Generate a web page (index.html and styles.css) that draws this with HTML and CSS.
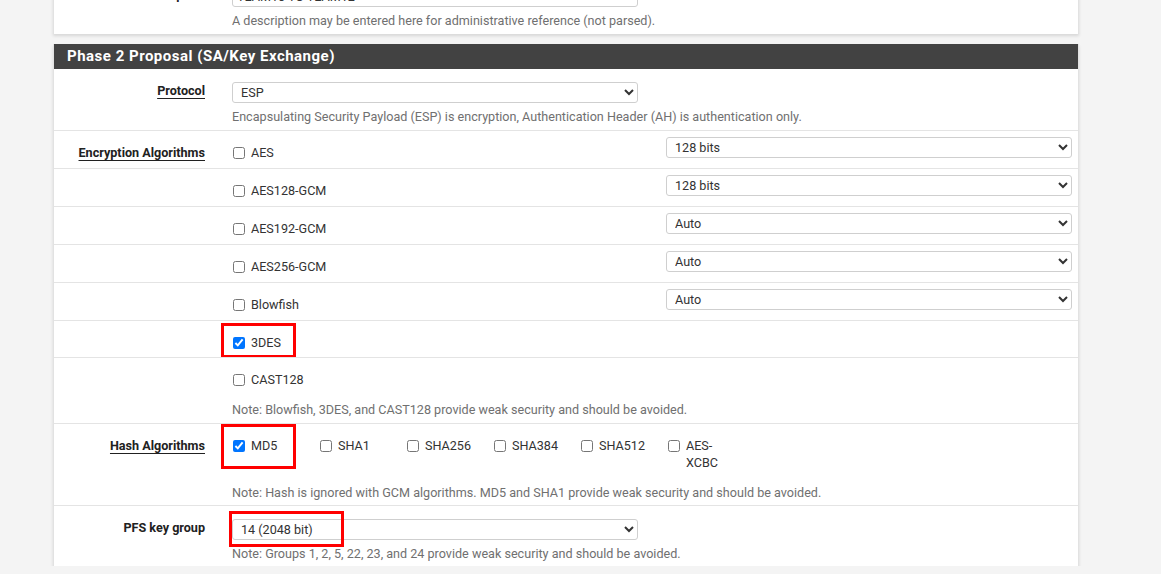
FILE: index.html
```html
<!DOCTYPE html>
<html lang="en">
<head>
<meta charset="utf-8">
<title>Phase 2 Proposal</title>
<link rel="stylesheet" href="styles.css">
</head>
<body>
<div class="page">
  <section class="panel panel-top">
    <div class="row row-field">
      <div class="label"><span class="label-text">Description</span></div>
      <div class="content">
        <input class="field" type="text" value="TEAM10 TO TEAM12">
        <div class="help">A description may be entered here for administrative reference (not parsed).</div>
      </div>
    </div>
  </section>

  <section class="panel panel-main">
    <h2 class="panel-heading">Phase 2 Proposal (SA/Key Exchange)</h2>

    <div class="row row-field row-first">
      <div class="label"><span class="label-text req">Protocol</span></div>
      <div class="content">
        <select class="field"><option>ESP</option></select>
        <div class="help">Encapsulating Security Payload (ESP) is encryption, Authentication Header (AH) is authentication only.</div>
      </div>
    </div>

    <div class="row row-enc">
      <div class="label"><span class="label-text req">Encryption Algorithms</span></div>
      <div class="content split">
        <label class="check"><input type="checkbox"><span>AES</span></label>
        <select class="field field-enc"><option>128 bits</option></select>
      </div>
    </div>

    <div class="row row-enc">
      <div class="label"></div>
      <div class="content split">
        <label class="check"><input type="checkbox"><span>AES128-GCM</span></label>
        <select class="field field-enc"><option>128 bits</option></select>
      </div>
    </div>

    <div class="row row-enc">
      <div class="label"></div>
      <div class="content split">
        <label class="check"><input type="checkbox"><span>AES192-GCM</span></label>
        <select class="field field-enc"><option>Auto</option></select>
      </div>
    </div>

    <div class="row row-enc">
      <div class="label"></div>
      <div class="content split">
        <label class="check"><input type="checkbox"><span>AES256-GCM</span></label>
        <select class="field field-enc"><option>Auto</option></select>
      </div>
    </div>

    <div class="row row-enc">
      <div class="label"></div>
      <div class="content split">
        <label class="check"><input type="checkbox"><span>Blowfish</span></label>
        <select class="field field-enc"><option>Auto</option></select>
      </div>
    </div>

    <div class="row row-enc row-3des">
      <div class="label"></div>
      <div class="content">
        <label class="check"><input type="checkbox" checked><span>3DES</span></label>
      </div>
      <div class="mark mark-3des"></div>
    </div>

    <div class="row row-note">
      <div class="label"></div>
      <div class="content">
        <label class="check"><input type="checkbox"><span>CAST128</span></label>
        <div class="help help-note">Note: Blowfish, 3DES, and CAST128 provide weak security and should be avoided.</div>
      </div>
    </div>

    <div class="row row-hash">
      <div class="label"><span class="label-text req">Hash Algorithms</span></div>
      <div class="content">
        <div class="hash-list">
          <label class="check hash"><input type="checkbox" checked><span>MD5</span></label>
          <label class="check hash"><input type="checkbox"><span>SHA1</span></label>
          <label class="check hash"><input type="checkbox"><span>SHA256</span></label>
          <label class="check hash"><input type="checkbox"><span>SHA384</span></label>
          <label class="check hash"><input type="checkbox"><span>SHA512</span></label>
          <label class="check hash"><input type="checkbox"><span>AES-XCBC</span></label>
        </div>
        <div class="help help-note">Note: Hash is ignored with GCM algorithms. MD5 and SHA1 provide weak security and should be avoided.</div>
      </div>
      <div class="mark mark-md5"></div>
    </div>

    <div class="row row-field row-pfs">
      <div class="label"><span class="label-text">PFS key group</span></div>
      <div class="content">
        <select class="field"><option>14 (2048 bit)</option></select>
        <div class="help">Note: Groups 1, 2, 5, 22, 23, and 24 provide weak security and should be avoided.</div>
      </div>
      <div class="mark mark-pfs"></div>
    </div>
  </section>
</div>
</body>
</html>
```

FILE: styles.css
```css
* {
  box-sizing: border-box;
}

html, body {
  margin: 0;
  padding: 0;
  background: #f4f4f4;
  font-family: Roboto, "Liberation Sans", Arial, sans-serif;
  font-size: 12.6px;
  color: #212121;
  overflow: hidden;
}

.page {
  width: 1026px;
  margin: -27px 0 0 53px;
}

.panel {
  background: #fff;
  border-left: 1px solid #e2e2e2;
  border-right: 1px solid #e2e2e2;
  box-shadow: 0 2px 3px rgba(0, 0, 0, 0.12);
}

.panel-main {
  margin-top: 10px;
}

.panel-heading {
  margin: 0;
  height: 25px;
  line-height: 25px;
  padding-left: 13px;
  background: #424242;
  color: #fff;
  font-size: 15px;
  font-weight: 700;
  letter-spacing: 0.5px;
}

.row {
  position: relative;
  display: grid;
  grid-template-columns: 178px 840px;
  border-top: 1px solid #e4e4e4;
  padding: 13px 0 5px;
}

.panel-top .row,
.row-first {
  border-top: none;
}

.row-enc {
  padding-top: 12.5px;
  padding-bottom: 7.5px;
}

.row-3des {
  padding-bottom: 6.5px;
}

.row-hash {
  padding-bottom: 4px;
}

.row-pfs {
  padding-bottom: 4px;
}

.label {
  text-align: right;
  padding-right: 27px;
  line-height: 17px;
}

.label-text {
  font-weight: 700;
  color: #212121;
}

.label-text.req {
  text-decoration: underline;
  text-underline-offset: 3px;
  text-decoration-thickness: 1px;
}

.content {
  min-width: 0;
}

.field {
  display: block;
  width: 406px;
  height: 21px;
  margin: 0;
  padding: 0 0 0 4px;
  border: 1px solid #cfcfcf;
  border-radius: 3px;
  background: #fff;
  font-family: Roboto, "Liberation Sans", Arial, sans-serif;
  font-size: 12.6px;
  color: #333;
}

.split {
  display: grid;
  grid-template-columns: 406px 406px;
  column-gap: 28px;
  align-items: start;
}

.field-enc {
  margin-top: -6.5px;
}

.help {
  margin-top: 5px;
  line-height: 17px;
  color: #707070;
}

.help-note {
  margin-top: 13px;
}

.check {
  display: flex;
  align-items: flex-start;
  line-height: 17px;
  color: #333;
}

.check input {
  flex: none;
  width: 12px;
  height: 12px;
  margin: 3px 6px 0 1px;
}

.hash-list {
  display: grid;
  grid-template-columns: repeat(6, 87px);
}

.hash {
  width: 62px;
}

.mark {
  position: absolute;
  border: 3px solid #f00;
  pointer-events: none;
}

.mark-3des {
  left: 167px;
  top: 2px;
  width: 75px;
  height: 35px;
}

.mark-md5 {
  left: 167px;
  top: 0;
  width: 75px;
  height: 45px;
}

.mark-pfs {
  left: 175px;
  top: 5px;
  width: 115px;
  height: 36px;
}
```
